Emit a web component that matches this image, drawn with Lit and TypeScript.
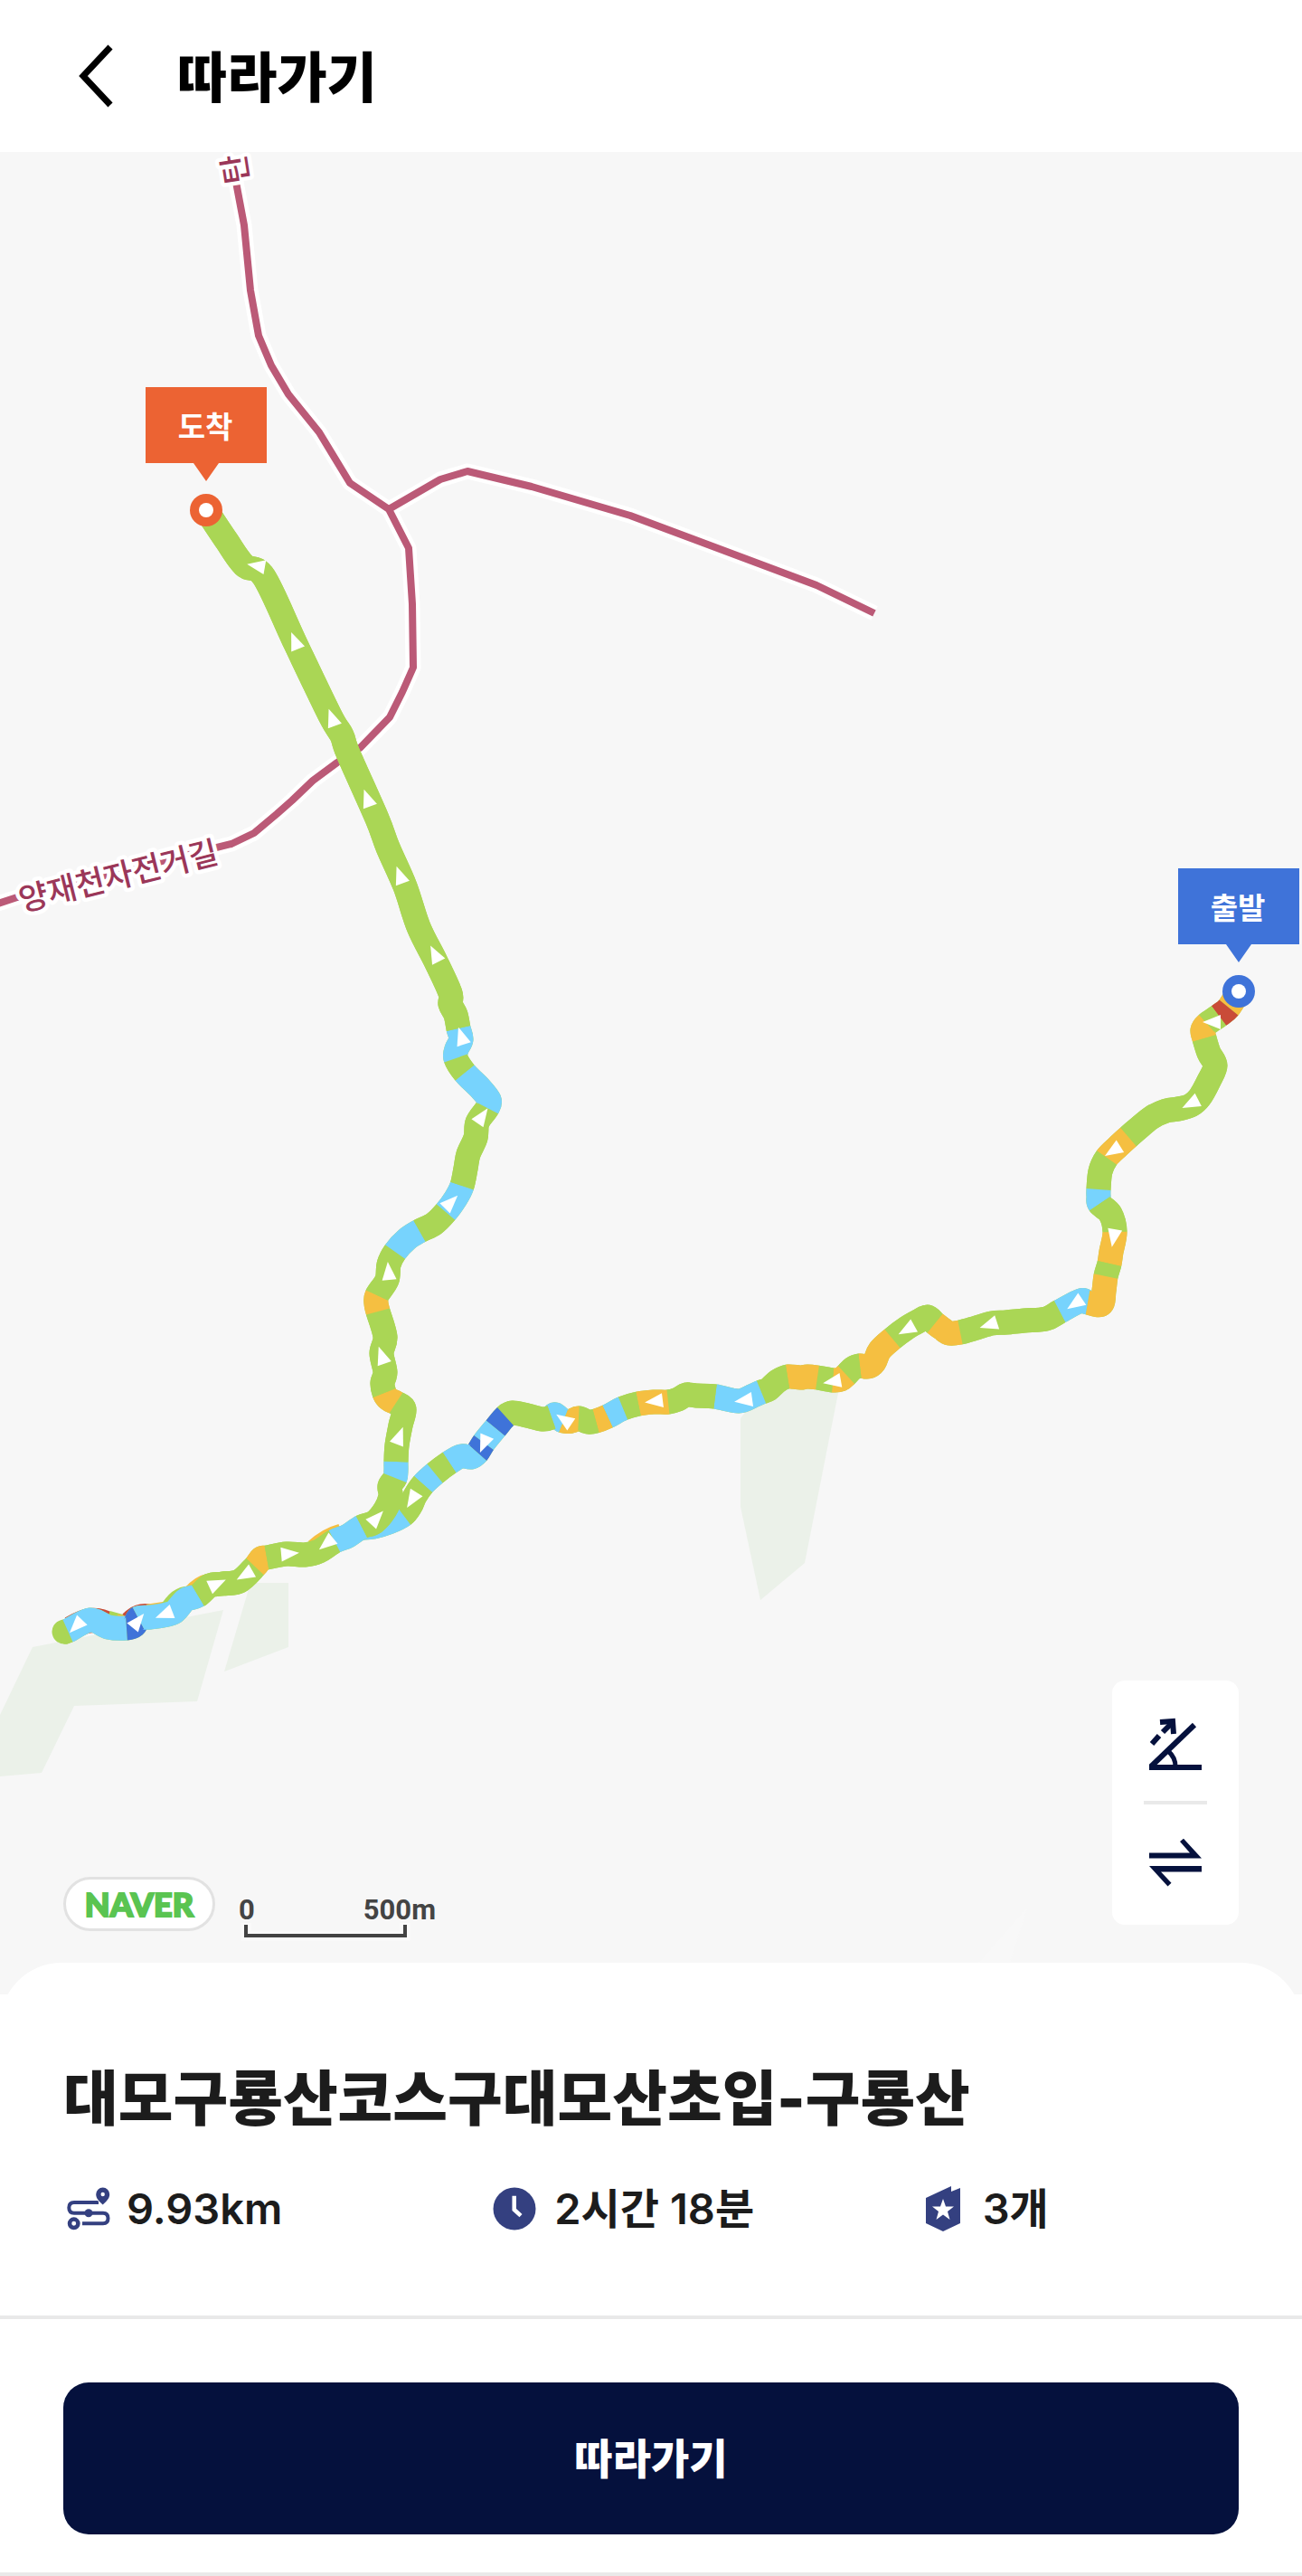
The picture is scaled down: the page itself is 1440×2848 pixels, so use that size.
import { LitElement, html, svg, css } from "lit";
import { customElement } from "lit/decorators.js";

type Point = [number, number];
/** A run of route points drawn in one slope colour; it ends where the next run starts. */
type Run = [string, Point[]];

const G = "#aad655";
const Y = "#f5bf41";
const B = "#77d3fd";
const D = "#3f73d9";
const R = "#c94b38";

const OUTBOUND: Run[] = [
  [Y, [[1370, 1096]]],
  [R, [[1359, 1114]]],
  [G, [[1348, 1123]]],
  [Y, [[1335, 1132], [1330, 1139]]],
  [G, [[1332, 1148], [1337, 1164], [1344, 1178], [1337, 1195], [1327, 1213], [1317, 1222], [1303, 1226], [1290, 1228], [1273, 1236]]],
  [Y, [[1248, 1257], [1236, 1268]]],
  [G, [[1224, 1280], [1217, 1295]]],
  [B, [[1215, 1315], [1215, 1323]]],
  [G, [[1216, 1331], [1228, 1342]]],
  [Y, [[1233, 1362], [1229, 1384]]],
  [G, [[1227, 1397]]],
  [Y, [[1223, 1411], [1221, 1427], [1218, 1442]]],
  [B, [[1203, 1440], [1195, 1438]]],
  [G, [[1172, 1450], [1157, 1458], [1133, 1460], [1113, 1462], [1097, 1463], [1080, 1468]]],
  [Y, [[1062, 1473], [1050, 1474], [1042, 1469]]],
  [G, [[1034, 1463], [1026, 1456], [1017, 1460], [1003, 1468]]],
  [Y, [[987, 1480], [973, 1493], [967, 1506], [960, 1511]]],
  [G, [[951, 1510], [943, 1513]]],
  [Y, [[936, 1520], [930, 1525]]],
  [G, [[921, 1526]]],
  [Y, [[904, 1523], [893, 1522], [885, 1523]]],
  [G, [[871, 1522], [860, 1527], [850, 1536]]],
  [B, [[842, 1539], [833, 1543], [817, 1549]]],
  [G, [[791, 1544], [770, 1543], [759, 1542], [750, 1547]]],
  [Y, [[739, 1550], [723, 1550]]],
  [G, [[706, 1552]]],
  [B, [[689, 1557]]],
  [Y, [[672, 1566]]],
  [G, [[659, 1571], [650, 1572]]],
  [Y, [[640, 1568], [632, 1571]]],
  [B, [[623, 1571], [614, 1564]]],
  [G, [[610, 1567], [600, 1569], [583, 1565], [567, 1562]]],
  [D, [[559, 1566]]],
  [B, [[548, 1579]]],
  [D, [[535, 1595]]],
  [B, [[528, 1606], [521, 1611], [510, 1610]]],
  [G, [[497, 1617]]],
  [B, [[481, 1629]]],
  [G, [[468, 1641], [459, 1654], [454, 1665]]],
  [B, [[446, 1675], [430, 1683], [413, 1688], [400, 1689]]],
];

const RETURN: Run[] = [
  [G, [[71, 1804]]],
  [B, [[75, 1803], [100, 1791], [120, 1799]]],
  [D, [[140, 1800], [149, 1797]]],
  [B, [[153, 1789], [166, 1788], [180, 1786], [193, 1782], [205, 1769]]],
  [G, [[219, 1764], [232, 1753], [246, 1751], [265, 1748]]],
  [Y, [[282, 1732], [289, 1723]]],
  [G, [[295, 1722], [317, 1718], [337, 1719], [353, 1715]]],
  [B, [[370, 1704], [385, 1698]]],
  [G, [[400, 1688], [414, 1683], [426, 1669], [432, 1654], [431, 1643]]],
  [B, [[437, 1634], [438, 1625]]],
  [G, [[438, 1616], [439, 1598], [443, 1576], [447, 1558]]],
  [Y, [[438, 1551], [430, 1547]]],
  [G, [[425, 1540], [423, 1529], [426, 1517], [422, 1496], [426, 1478]]],
  [Y, [[418, 1450], [416, 1441]]],
  [G, [[417, 1432], [428, 1415], [430, 1398]]],
  [B, [[437, 1384], [450, 1370]]],
  [G, [[464, 1361], [480, 1353]]],
  [B, [[493, 1340], [504, 1325]]],
  [G, [[511, 1311], [515, 1292], [518, 1276], [526, 1258], [528, 1241]]],
  [B, [[539, 1225], [541, 1216], [530, 1202]]],
  [G, [[514, 1186]]],
  [B, [[504, 1170], [505, 1160], [510, 1149]]],
  [G, [[507, 1137], [504, 1122], [498, 1110], [498, 1098], [482, 1063], [463, 1025], [448, 980], [429, 937], [417, 905], [385, 833], [378, 813], [365, 791], [327, 712], [292, 638], [270, 625], [250, 597], [228, 564]]],
];

/** Slivers of the outbound leg that show past the edge of the return leg. */
const SLIVERS: [string, string][] = [
  [R, "M79 1800Q101 1786 118 1795"],
  [G, "M118 1794L136 1799"],
  [Y, "M128 1798L140 1800"],
  [R, "M145 1794Q154 1785 164 1787"],
  [Y, "M164 1787L190 1783"],
  [G, "M188 1784Q198 1766 210 1767"],
  [Y, "M214 1765Q222 1755 232 1753"],
  [Y, "M350 1714Q363 1702 378 1698"],
];

/** x, y and heading in degrees clockwise from north. */
const ARROWS: [number, number, number][] = [
  [1343, 1130, -90], [1319, 1219, -117], [1233, 1271, -122], [1232, 1366, -170],
  [1191, 1440, -124], [1096, 1464, -108], [1005, 1469, -119], [923, 1527, -100],
  [825, 1548, -98], [726, 1549, -97], [626, 1571, -56], [536, 1594, -157],
  [457, 1656, -148], [363, 1705, -129], [273, 1740, -120], [184, 1784, -111],
  [86, 1796, -136], [151, 1794, 39], [238, 1752, 65], [318, 1718, 85],
  [415, 1680, 43], [441, 1590, 21], [423, 1501, -19], [430, 1408, -5],
  [497, 1331, 45], [532, 1236, 35], [511, 1148, -18], [482, 1057, -27],
  [443, 970, -20], [407, 885, -20], [368, 796, -20], [327, 711, -22], [286, 626, -80],
];

const ROADS = [
  "M260 196L270 249L277 321L286 371L300 404L319 436L353 478L387 534L430 563L452 606L456 668L457 738L445 765L431 793L398 827L373 843L346 863L323 885L306 900L281 921L256 933L19 992L-8 1001",
  "M430 563L487 530L517 521L588 538L697 570L903 647L967 678",
];

/** Cuts a route into one smooth curve for each coloured run. */
function curves(runs: Run[]): { color: string; d: string }[] {
  const all = runs.flatMap(([, points]) => points);
  const at = (i: number) => all[Math.max(0, Math.min(all.length - 1, i))];
  let start = 0;
  return runs.map(([color, points]) => {
    const end = Math.min(start + points.length, all.length - 1);
    let d = `M${at(start)[0]} ${at(start)[1]}`;
    for (let i = start; i < end; i++) {
      const [a, b, c, e] = [at(i - 1), at(i), at(i + 1), at(i + 2)];
      d += `C${b[0] + (c[0] - a[0]) / 6} ${b[1] + (c[1] - a[1]) / 6} `;
      d += `${c[0] - (e[0] - b[0]) / 6} ${c[1] - (e[1] - b[1]) / 6} ${c[0]} ${c[1]}`;
    }
    start += points.length;
    return { color, d };
  });
}

@customElement("course-map")
export class CourseMap extends LitElement {
  static styles = css`
    :host { display: block; }
    .canvas { display: block; width: 100%; height: auto; background: #f7f7f7; }
    .wood { fill: #ebf1e9; }
    .clearing { fill: #f8f8f8; }
    .casing, .road, .leg { fill: none; stroke-linejoin: round; }
    .casing { stroke: #fff; stroke-width: 17; }
    .road { stroke: #bb5a77; stroke-width: 8; }
    .leg { stroke-width: 27; }
    .base { stroke: #aad655; stroke-linecap: round; }
    .arrow { fill: #fff; }
    .street {
      font: 500 35px/1 "Noto Sans CJK KR", sans-serif;
      fill: #9b3759; stroke: #fff; stroke-width: 9; stroke-linejoin: round;
      paint-order: stroke; text-anchor: middle;
    }
    .flag { font: 700 33px "Noto Sans CJK KR", sans-serif; fill: #fff; text-anchor: middle; }
    .finish { fill: #ec6333; }
    .start { fill: #3f73d9; }
    .hole { fill: #fff; }
  `;

  private leg(runs: Run[]) {
    const parts = curves(runs);
    return svg`
      <path class="leg base" d=${parts.map((p) => p.d).join("")}></path>
      ${parts.map((p) => svg`<path class="leg" stroke=${p.color} d=${p.d}></path>`)}`;
  }

  private marker(x: number, y: number, kind: string, label: string) {
    return svg`<g transform="translate(${x} ${y})">
      <path class=${kind} d="M-67 -136H67V-52H14L0 -32L-14 -52H-67Z"></path>
      <circle class=${kind} r="18"></circle>
      <circle class="hole" r="8"></circle>
      <text class="flag" x="-1" y="-80">${label}</text>
    </g>`;
  }

  render() {
    return html`<svg class="canvas" viewBox="0 168 1440 2037" role="img" aria-label="코스 지도">
      <path class="wood" d="M36 1821L247 1780L218 1881L82 1886L46 1960L0 1964V1896Z"></path>
      <path class="wood" d="M277 1750H319V1821L248 1848Z"></path>
      <path class="wood" d="M819 1568L850 1530H929L890 1728L841 1769L819 1666Z"></path>
      <path class="clearing" d="M1137 2107L1117 2170L1082 2170Z"></path>
      ${ROADS.map((d) => svg`<path class="casing" d=${d}></path>`)}
      ${ROADS.map((d) => svg`<path class="road" d=${d}></path>`)}
      <text class="street" transform="translate(131 969) rotate(-14)" y="12">양재천자전거길</text>
      <text class="street" transform="translate(261 187) rotate(-99)" y="12">탄</text>
      ${this.leg(OUTBOUND)}
      ${SLIVERS.map(([c, d]) => svg`<path class="leg" stroke=${c} d=${d}></path>`)}
      ${this.leg(RETURN)}
      ${ARROWS.map(([x, y, a]) => svg`<path class="arrow" d="M0 -13L8 7H-8Z" transform="translate(${x} ${y}) rotate(${a})"></path>`)}
      ${this.marker(228, 564, "finish", "도착")}
      ${this.marker(1370, 1096, "start", "출발")}
    </svg>`;
  }
}

@customElement("app-root")
export class AppRoot extends LitElement {
  static styles = css`
    :host {
      display: block; background: #fff; color: #1c1c1c;
      font-family: Inter, "Noto Sans CJK KR", sans-serif;
    }
    button { border: 0; margin: 0; padding: 0; background: none; color: inherit; font: inherit; cursor: pointer; }
    svg { display: block; }
    h1, h2, ul { margin: 0; padding: 0; }
    .top { display: flex; align-items: center; gap: 64px; height: 168px; padding: 0 80px; color: #000; }
    .top-title { padding-top: 4px; font-size: 60px; line-height: 80px; font-weight: 900; }
    .stage { position: relative; }
    .tools {
      position: absolute; right: 70px; bottom: 77px; width: 140px;
      display: flex; flex-direction: column; align-items: center;
      background: #fff; border-radius: 14px;
    }
    .tool { display: grid; place-items: center; width: 100%; height: 133px; color: #05113d; }
    .rule { width: 70px; height: 4px; background: #e9e9e9; }
    .legend { position: absolute; left: 70px; bottom: 59px; display: flex; align-items: flex-end; gap: 26px; }
    .brand {
      display: grid; place-items: center; box-sizing: border-box; width: 168px; height: 60px; margin-bottom: 11px;
      border: 3px solid #e2e2e2; border-radius: 30px; background: #fff;
      color: #5ac451; font: 900 36px/40px Lato, sans-serif; text-decoration: none;
      -webkit-text-stroke: 2px #5ac451;
    }
    .scale { color: #444; font: 700 31px/28px Roboto, sans-serif; }
    .scale-text { display: flex; justify-content: space-between; width: 218px; }
    .sheet { position: relative; margin-top: -35px; padding: 110px 70px 82px; border-radius: 68px 68px 0 0; background: #fff; }
    .name { font-size: 66px; line-height: 80px; font-weight: 900; }
    .stats { display: grid; grid-template-columns: repeat(3, 1fr); gap: 120px; margin-top: 46px; list-style: none; }
    .stat { display: flex; align-items: center; gap: 18px; font-size: 47px; line-height: 72px; font-weight: 600; white-space: nowrap; }
    .stat svg { flex: none; color: #344080; }
    .bottom { padding: 70px 70px 42px; border-top: 4px solid #e9e9e9; border-bottom: 4px solid #e9e9e9; }
    .follow { display: block; width: 100%; height: 168px; padding-bottom: 6px; border-radius: 28px; background: #05113d; color: #fff; font-size: 46px; font-weight: 900; }
  `;

  render() {
    return html`
      <header class="top">
        <button class="back" aria-label="뒤로">
          <svg width="52" height="72" viewBox="0 0 52 72" fill="none" stroke="currentColor" stroke-width="7">
            <path d="M42 4L12 36L42 68"></path>
          </svg>
        </button>
        <h1 class="top-title">따라가기</h1>
      </header>
      <main>
        <div class="stage">
          <course-map></course-map>
          <div class="legend">
            <a class="brand" href="#naver">NAVER</a>
            <div class="scale">
              <div class="scale-text"><span>0</span><span>500m</span></div>
              <svg width="192" height="20" viewBox="0 0 192 20" fill="none">
                <path d="M8 0V14H184V0" stroke="#fbfbfb" stroke-width="11"></path>
                <path d="M8 2V14H184V2" stroke="#444" stroke-width="4"></path>
              </svg>
            </div>
          </div>
          <div class="tools">
            <button class="tool" aria-label="경사도">
              <svg width="64" height="66" viewBox="0 0 64 66" fill="none" stroke="currentColor" stroke-width="6">
                <path d="M53 15L5 61"></path>
                <path d="M3 62H61"></path>
                <path d="M24 44Q32 51 32 61" stroke-width="5"></path>
                <path d="M15 12L29 11L30 25"></path>
                <path d="M18 23L29 12M6 36L14 27"></path>
              </svg>
            </button>
            <span class="rule"></span>
            <button class="tool" aria-label="방향 바꾸기">
              <svg width="64" height="64" viewBox="0 0 64 64" fill="currentColor">
                <path d="M3 18.500H48L37 6L41 2.700L61 24.500H3Z"></path>
                <path d="M61 33H3L23.500 55.500L27.500 51.700L16 39.500H61Z"></path>
              </svg>
            </button>
          </div>
        </div>
        <section class="sheet">
          <h2 class="name">대모구룡산코스구대모산초입-구룡산</h2>
          <ul class="stats">
            <li class="stat">
              <svg width="52" height="52" viewBox="0 0 52 52" fill="none" stroke="currentColor" stroke-width="4">
                <path d="M39 19H12Q6.300 19 6.300 24.800Q6.300 30.700 12 30.700H44Q49.500 30.700 49.500 36.500Q49.500 42.300 44 42.300H21"></path>
                <circle cx="28" cy="30.700" r="4.500" fill="currentColor" stroke="none"></circle>
                <path fill="currentColor" stroke="#fff" stroke-width="2" paint-order="stroke" d="M43.700 2.500a7.500 7.500 0 0 1 7.500 7.500c0 5-4 8-7.500 11.500c-3.500-3.500-7.500-6.500-7.500-11.500a7.500 7.500 0 0 1 7.500-7.500z"></path>
                <circle cx="43.700" cy="10" r="2.200" fill="#fff" stroke="none"></circle>
                <circle cx="11.700" cy="42.300" r="4.700" stroke-width="4.500"></circle>
              </svg>
              <span>9.93km</span>
            </li>
            <li class="stat">
              <svg width="52" height="52" viewBox="0 0 52 52">
                <circle cx="26" cy="26" r="23.500" fill="currentColor"></circle>
                <path d="M25.700 11.700V27L33 33.700" fill="none" stroke="#fff" stroke-width="4.500"></path>
              </svg>
              <span>2시간 18분</span>
            </li>
            <li class="stat">
              <svg width="52" height="52" viewBox="0 0 52 52">
                <path fill="currentColor" d="M7 14L35 1V7L45 3V42L26 51L7 42Z"></path>
                <path fill="#fff" d="M26 15L29 23.500H38L31 29L33.500 38L26 32.500L18.500 38L21 29L14 23.500H23Z"></path>
              </svg>
              <span>3개</span>
            </li>
          </ul>
        </section>
        <div class="bottom">
          <button class="follow">따라가기</button>
        </div>
      </main>
    `;
  }
}
